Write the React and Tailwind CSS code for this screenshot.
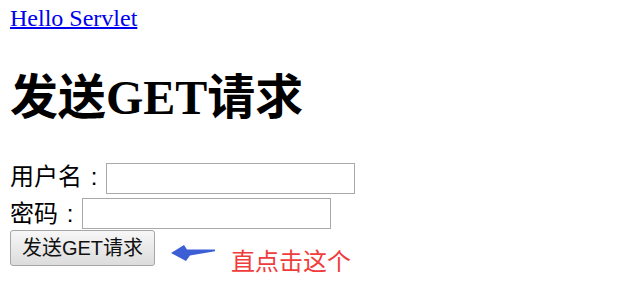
import React from "react";

const cjk = "font-['Noto_Sans_CJK_SC',sans-serif]";

const Colon = () => (
  <span className="inline-block w-[24px] text-center font-['Liberation_Sans',sans-serif]">:</span>
);

const Arrow = () => (
  <svg width="50" height="20" viewBox="0 0 50 20" className="mt-[13px] ml-[13px] shrink-0">
    <polygon
      points="3,10 16,2 19,6.5 47,6.5 47,8.2 22,12.5 18,18"
      fill="#3c5fd6"
    />
  </svg>
);

export default function App() {
  return (
    <div className="min-h-screen bg-white px-[10px] pt-[4px] text-black">
      {/* link */}
      <div className="h-[28px]">
        <a
          href="#"
          className="font-['Liberation_Serif','Noto_Sans_CJK_SC',serif] text-[24px] leading-[28px] text-[#0000ee] underline decoration-2"
        >
          Hello Servlet
        </a>
      </div>

      <h1 className="mt-[38px] font-['Liberation_Serif','Noto_Sans_CJK_SC',serif] text-[48px] leading-[55px] font-bold whitespace-nowrap">
        发送GET请求
      </h1>

      {/* form */}
      <form className="mt-[38px]" onSubmit={(e) => e.preventDefault()}>
        <div className="flex items-start h-[31px]">
          <span className={`${cjk} text-[24px] leading-[24px] whitespace-nowrap`}>
            用户名<Colon />
          </span>
          <input type="text" className="w-[249px] h-[31px] border border-[#a9a9a9] bg-white" />
        </div>
        <div className="flex items-start h-[31px] mt-[4px]">
          <span className={`${cjk} text-[24px] leading-[24px] whitespace-nowrap mt-[2px]`}>
            密码<Colon />
          </span>
          <input type="password" className="w-[249px] h-[31px] border border-[#a9a9a9] bg-white" />
        </div>
        <div className="flex items-start mt-[1px]">
          <button
            type="submit"
            className="w-[145px] h-[36px] border border-[#a6a6a6] rounded-[3px] bg-linear-to-b from-[#f7f7f7] to-[#dcdcdc] font-['Liberation_Sans','Noto_Sans_CJK_SC',sans-serif] text-[20px] leading-[24px] text-[#111] whitespace-nowrap"
          >
            发送GET请求
          </button>
          <Arrow />
          <span className={`${cjk} ml-[13px] mt-[18px] text-[24px] leading-[24px] text-[#f03c3c] whitespace-nowrap`}>
            直点击这个
          </span>
        </div>
      </form>
    </div>
  );
}
